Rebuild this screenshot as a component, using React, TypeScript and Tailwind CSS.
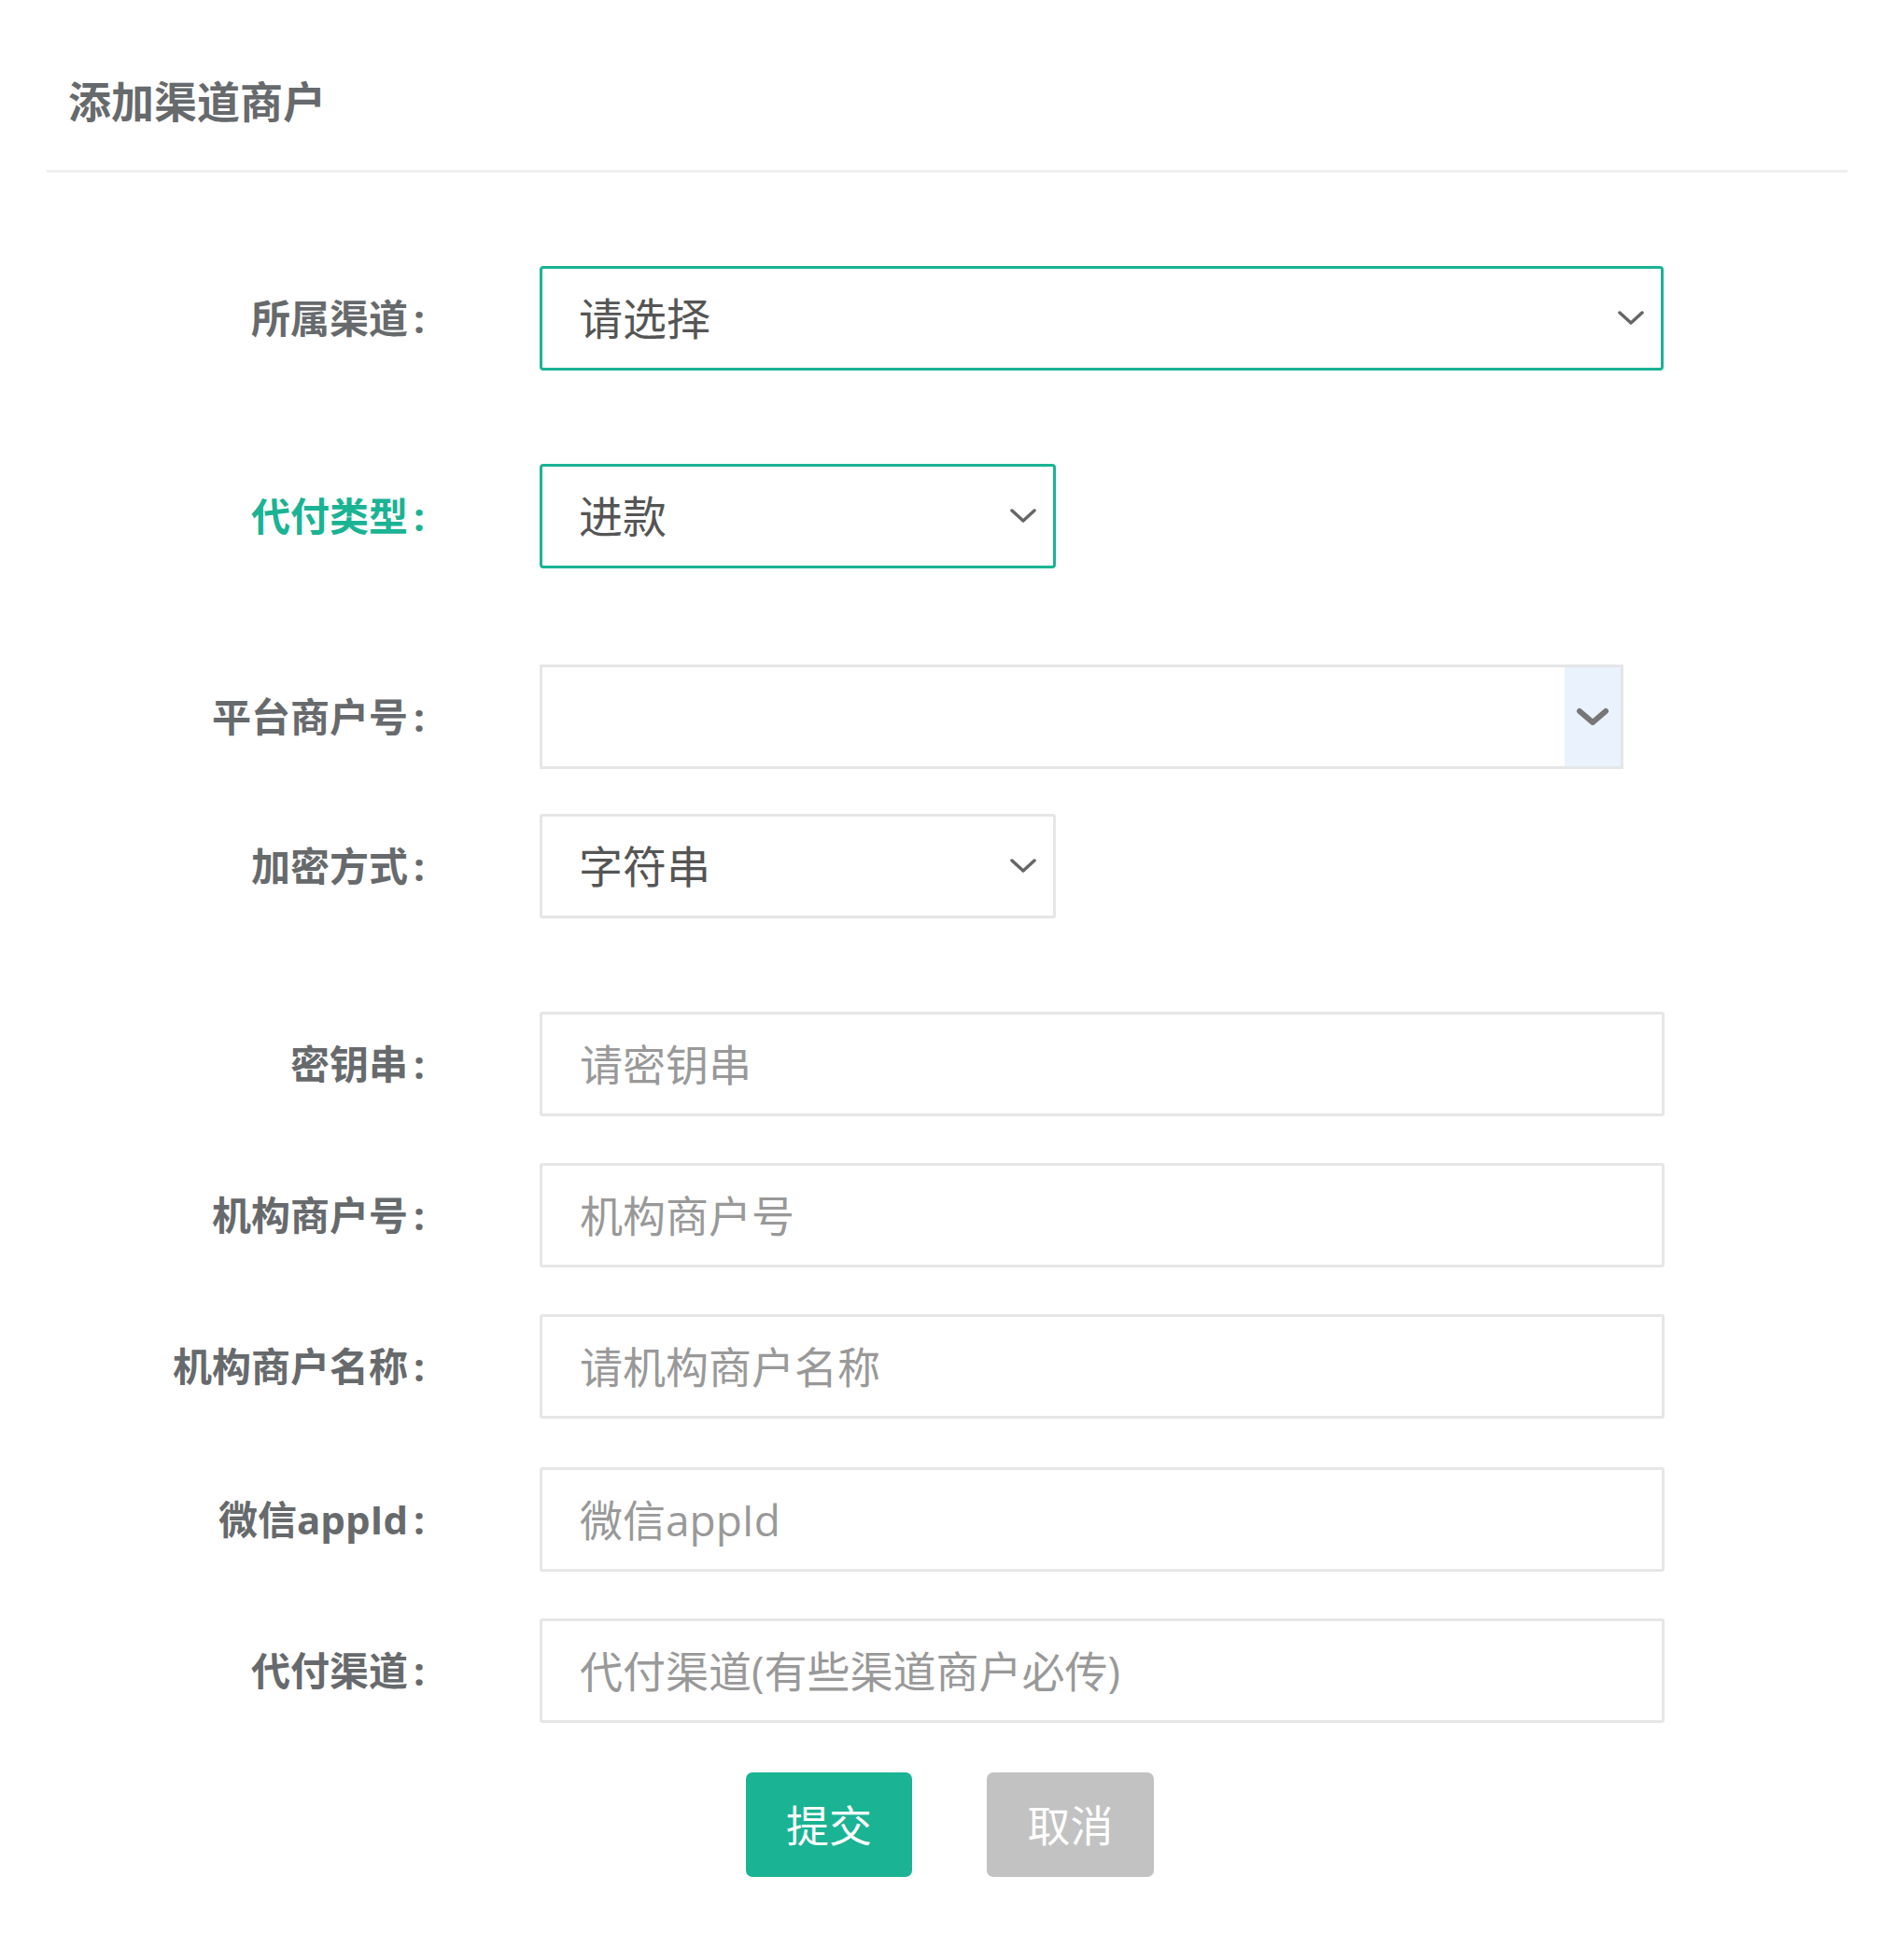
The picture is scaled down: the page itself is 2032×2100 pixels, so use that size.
import React from 'react';

const FONT = { fontFamily: '"Open Sans", "Noto Sans CJK SC", sans-serif' };

const ThinChevron: React.FC = () => (
  <svg width="28" height="16" viewBox="0 0 28 16" className="shrink-0">
    <polyline points="2,2 14,13 26,2" fill="none" stroke="#666" strokeWidth="3.5" strokeLinecap="round" strokeLinejoin="round" />
  </svg>
);

const BoldChevron: React.FC = () => (
  <svg width="36" height="20" viewBox="0 0 36 20">
    <polyline points="4,4 18,16 32,4" fill="none" stroke="#777" strokeWidth="6" strokeLinecap="round" strokeLinejoin="round" />
  </svg>
);

interface RowProps {
  label: string;
  mt: string;
  active?: boolean;
  children: React.ReactNode;
}

const Row: React.FC<RowProps> = ({ label, mt, active, children }) => (
  <div className={`flex items-center h-[112px] ${mt}`}>
    <div
      className={`w-[455px] text-right text-[42px] font-bold leading-none whitespace-nowrap ${
        active ? 'text-[#1ab394]' : 'text-[#676a6c]'
      }`}
    >
      {label}
      <span className="ml-[6px]">:</span>
    </div>
    <div className="ml-[123px] h-full">{children}</div>
  </div>
);

const TextInput: React.FC<{ placeholder: string }> = ({ placeholder }) => (
  <input
    type="text"
    placeholder={placeholder}
    style={FONT}
    className="w-[1205px] h-[112px] border-[3px] border-[#e5e6e7] rounded-[3px] bg-white px-[40px] text-[46px] text-[#555] placeholder:text-[#999] outline-none"
  />
);

export default function App() {
  return (
    <div className="w-[2032px] min-h-[2100px] bg-white" style={FONT}>
      <div className="ml-[50px] w-[1929px] border-b-[3px] border-[#eeeff1] pl-[23px] pt-[78px] pb-[44px]">
        <h5 className="text-[46px] font-bold leading-[60px] text-[#676a6c]">添加渠道商户</h5>
      </div>

      <div className="flex flex-col">
        <Row label="所属渠道" mt="mt-[100px]">
          <div className="w-[1204px] h-[112px] border-[3px] border-[#1ab394] rounded-[4px] bg-white flex items-center justify-between pl-[39px] pr-[18px]">
            <span className="text-[47px] text-[#555] leading-none">请选择</span>
            <ThinChevron />
          </div>
        </Row>

        <Row label="代付类型" mt="mt-[100px]" active>
          <div className="w-[553px] h-[112px] border-[3px] border-[#1ab394] rounded-[4px] bg-white flex items-center justify-between pl-[39px] pr-[18px]">
            <span className="text-[47px] text-[#555] leading-none">进款</span>
            <ThinChevron />
          </div>
        </Row>

        <Row label="平台商户号" mt="mt-[103px]">
          <div className="w-[1161px] h-[112px] border-[3px] border-[#e5e6e7] bg-white flex">
            <div className="flex-1" />
            <div className="w-[60px] h-full bg-[#eaf2fd] flex items-center justify-center">
              <BoldChevron />
            </div>
          </div>
        </Row>

        <Row label="加密方式" mt="mt-[48px]">
          <div className="w-[553px] h-[112px] border-[3px] border-[#e5e6e7] rounded-[3px] bg-white flex items-center justify-between pl-[39px] pr-[18px]">
            <span className="text-[47px] text-[#555] leading-none">字符串</span>
            <ThinChevron />
          </div>
        </Row>

        <Row label="密钥串" mt="mt-[100px]">
          <TextInput placeholder="请密钥串" />
        </Row>

        <Row label="机构商户号" mt="mt-[50px]">
          <TextInput placeholder="机构商户号" />
        </Row>

        <Row label="机构商户名称" mt="mt-[50px]">
          <TextInput placeholder="请机构商户名称" />
        </Row>

        <Row label="微信appId" mt="mt-[52px]">
          <TextInput placeholder="微信appId" />
        </Row>

        <Row label="代付渠道" mt="mt-[50px]">
          <TextInput placeholder="代付渠道(有些渠道商户必传)" />
        </Row>

        <div className="flex mt-[53px] ml-[799px] gap-[80px]">
          <button className="w-[178px] h-[112px] rounded-[7px] bg-[#1ab394] text-white text-[46px]" style={FONT}>
            提交
          </button>
          <button className="w-[179px] h-[112px] rounded-[7px] bg-[#c2c2c2] text-white text-[46px]" style={FONT}>
            取消
          </button>
        </div>
      </div>
    </div>
  );
}
